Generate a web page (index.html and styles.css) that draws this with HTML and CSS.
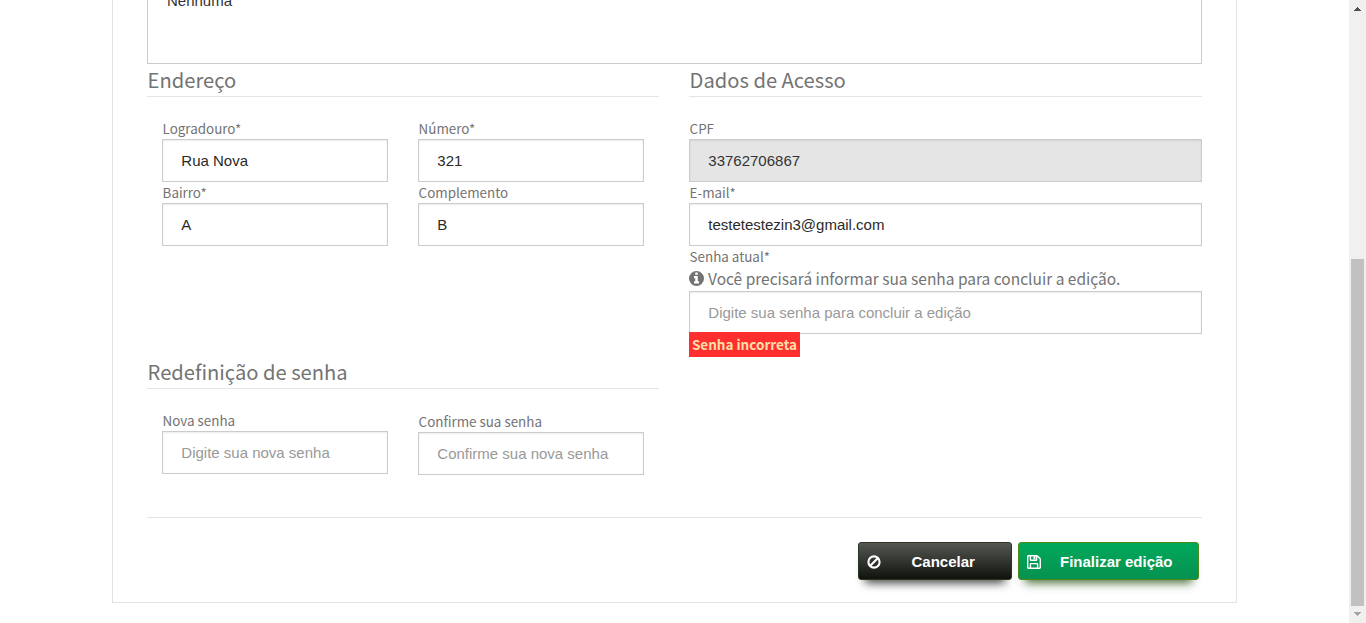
FILE: index.html
```html
<!DOCTYPE html>
<html lang="pt-BR">
<head>
<meta charset="utf-8">
<title>Editar cadastro</title>
<link rel="stylesheet" href="styles.css">
</head>
<body>
<div class="viewport">
  <main class="page">
    <form class="card">
      <div class="notes"><span class="notes-text">Nenhuma</span></div>
      <div class="columns">
        <div class="column">
          <section class="section address">
            <h3 class="title">Endereço</h3>
            <div class="fields">
              <div class="field"><label class="label">Logradouro*</label><input class="input" value="Rua Nova"></div>
              <div class="field"><label class="label">Número*</label><input class="input" value="321"></div>
              <div class="field"><label class="label">Bairro*</label><input class="input" value="A"></div>
              <div class="field"><label class="label">Complemento</label><input class="input" value="B"></div>
            </div>
          </section>
          <section class="section">
            <h3 class="title">Redefinição de senha</h3>
            <div class="fields">
              <div class="field"><label class="label">Nova senha</label><input class="input" placeholder="Digite sua nova senha"></div>
              <div class="field field-confirm"><label class="label">Confirme sua senha</label><input class="input" placeholder="Confirme sua nova senha"></div>
            </div>
          </section>
        </div>
        <div class="column">
          <section class="section">
            <h3 class="title">Dados de Acesso</h3>
            <div class="access">
              <div class="field"><label class="label">CPF</label><input class="input" value="33762706867" disabled></div>
              <div class="field"><label class="label">E-mail*</label><input class="input" value="testetestezin3@gmail.com"></div>
              <div class="field">
                <label class="label">Senha atual*</label>
                <p class="hint"><svg class="info" viewBox="0 0 1536 1536"><path fill="currentColor" fill-rule="evenodd" d="M1536 768A768 768 0 1 1 0 768A768 768 0 1 1 1536 768ZM1024 1248V1088Q1024 1056 992 1056H896V544Q896 512 864 512H544Q512 512 512 544V704Q512 736 544 736H640V1056H544Q512 1056 512 1088V1248Q512 1280 544 1280H992Q1024 1280 1024 1248ZM896 352V192Q896 160 864 160H672Q640 160 640 192V352Q640 384 672 384H864Q896 384 896 352Z"/></svg>Você precisará informar sua senha para concluir a edição.</p>
                <input class="input" placeholder="Digite sua senha para concluir a edição">
                <span class="error">Senha incorreta</span>
              </div>
            </div>
          </section>
        </div>
      </div>
      <div class="actions">
        <button type="button" class="button cancel">
          <svg class="icon" viewBox="0 0 14 14"><g fill="none" stroke="currentColor" stroke-width="2.1"><circle cx="7" cy="7" r="5.6"/><path d="M3 11L11 3"/></g></svg>
          <span class="button-text">Cancelar</span>
        </button>
        <button type="button" class="button save">
          <svg class="icon" viewBox="0 0 14 14"><g fill="none" stroke="currentColor" stroke-width="1.4" stroke-linejoin="round"><path d="M.7 1.4Q.7.7 1.4.7H9.6Q10.2.7 10.7 1.2L12.8 3.3Q13.3 3.8 13.3 4.4V12.6Q13.3 13.3 12.6 13.3H1.4Q.7 13.3.7 12.6Z"/><path d="M3.4 13V9.2Q3.4 8.6 4 8.6H10Q10.6 8.6 10.6 9.2V13M3.4 1V4.7Q3.4 5.3 4 5.3H9.1Q9.7 5.3 9.7 4.7V1"/></g><path fill="currentColor" d="M6.5 1.2H8.5V4.4H6.5Z"/></svg>
          <span class="button-text">Finalizar edição</span>
        </button>
      </div>
    </form>
  </main>
  <div class="scrollbar">
    <svg class="arrow" viewBox="0 0 17 17" shape-rendering="crispEdges"><path fill="#505050" d="M8 7h1v1H8zM7 8h3v1H7zM6 9h5v1H6zM5 10h7v1H5z"/></svg>
    <div class="track"><div class="thumb"></div></div>
    <svg class="arrow" viewBox="0 0 17 17" shape-rendering="crispEdges"><path fill="#a3a3a3" d="M5 6h7v1H5zM6 7h5v1H6zM7 8h3v1H7zM8 9h1v1H8z"/></svg>
  </div>
</div>
</body>
</html>
```
FILE: styles.css
```css
* { box-sizing: border-box; }
body { margin: 0; background: #fff; color: #737373; font-family: "Noto Sans CJK SC", sans-serif; overflow: hidden; }
.viewport { display: flex; width: 1366px; height: 623px; overflow: hidden; }
.page { flex: 1; padding-left: 112px; }
.card { width: 1125px; height: 603px; padding: 0 34px; border: 1px solid #e2e2e2; border-top: 0; }
.notes { height: 64px; border: 1px solid #ccc; border-top: 0; padding-left: 19px; overflow: hidden; font: 15px/20px "Liberation Sans", Arial, sans-serif; color: #333; }
.notes-text { display: block; margin-top: -9px; }
.columns { display: grid; grid-template-columns: 512px 513px; column-gap: 30px; height: 453px; }
.address { height: 292px; }
.title { margin: 0 0 21px; height: 33px; padding-left: .6px; border-bottom: 1px solid #e5e5e5; font-size: 20.15px; font-weight: 400; line-height: 31px; white-space: nowrap; }
.fields { display: grid; grid-template-columns: 226px 226px; column-gap: 30px; padding-left: 15px; }
.field { display: flex; flex-direction: column; align-items: stretch; }
.field-confirm { padding-top: 1px; }
.label { height: 21px; padding-left: .6px; font-size: 13.4px; line-height: 21px; }
.input { width: 100%; height: 43px; margin: 0; padding: 0 18.3px; border: 1px solid #ccc; border-radius: 0; outline: 0; background: #fff; box-shadow: inset 0 1px 2px rgba(0,0,0,.08); color: #2a2a2a; font: 15px "Liberation Sans", Arial, sans-serif; }
.input:disabled { background: #e5e5e5; color: #333; }
.input::placeholder { color: #999; opacity: 1; }
.hint { display: flex; align-items: center; gap: 4px; height: 24px; margin: 0; padding-bottom: 2px; font-size: 15.5px; line-height: 21px; white-space: nowrap; }
.info { width: 15px; height: 15px; margin-top: 1px; }
.error { align-self: flex-start; z-index: 1; width: 111px; height: 25px; margin-top: -2px; background: #ff2f2f; color: #ffdfa8; font-size: 13.5px; font-weight: 700; line-height: 24px; text-align: center; white-space: nowrap; }
.actions { display: flex; justify-content: flex-end; gap: 6px; padding: 24px 3px 0 0; border-top: 1px solid #e5e5e5; }
.button { display: flex; align-items: center; height: 38px; padding: 0 0 0 9px; border: 1px solid; border-radius: 3px; color: #fff; font: bold 15px "Liberation Sans", Arial, sans-serif; white-space: nowrap; }
.cancel { width: 154px; border-color: #2b3520; background: linear-gradient(#555753, #10120e); box-shadow: 0 10px 10px -7px rgba(0,0,0,.75); }
.save { width: 181px; border-color: #4c8a1c; background: linear-gradient(#00a95c, #079150); box-shadow: 0 10px 10px -7px rgba(30,75,5,.8); }
.icon { width: 14px; height: 14px; flex: none; margin: 1px 0 0 -1px; }
.cancel .button-text { margin-left: 30.5px; }
.save .button-text { margin-left: 19px; }
.scrollbar { display: flex; flex-direction: column; width: 17px; background: #f0f0f0; }
.arrow { display: block; width: 17px; height: 17px; flex: none; }
.track { flex: 1; padding: 242px 2px 0; }
.thumb { height: 347px; background: #c1c1c1; }
```
